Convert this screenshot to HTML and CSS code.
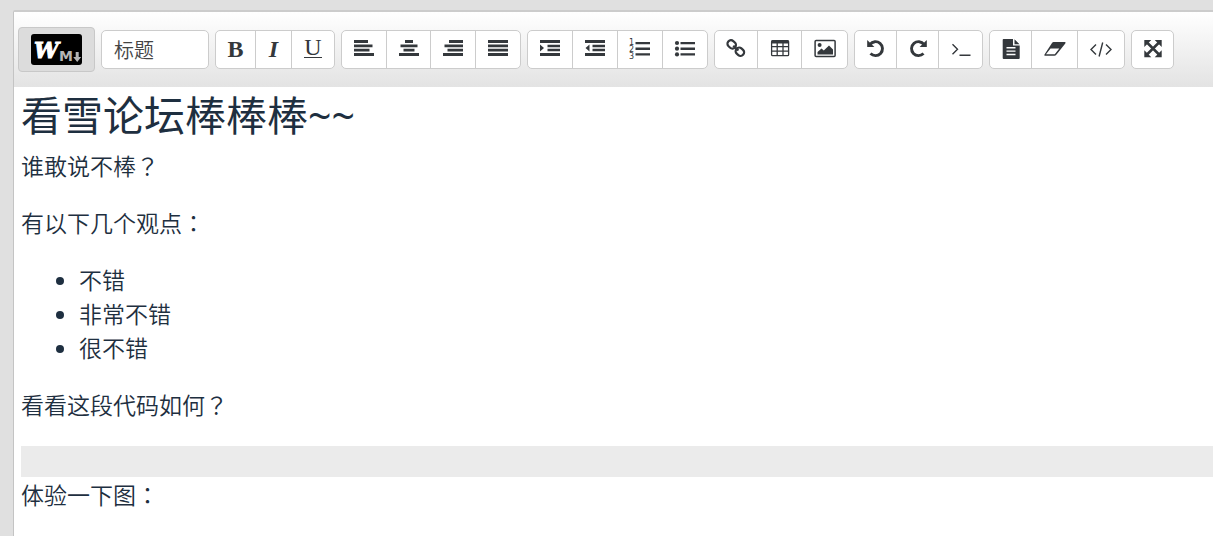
FILE: index.html
```html
<!DOCTYPE html>
<html lang="zh-CN">
<head>
<meta charset="utf-8">
<meta name="viewport" content="width=device-width, initial-scale=1">
<title>编辑器</title>
<link rel="stylesheet" href="styles.css">
</head>
<body>
<main class="editor">
  <div class="toolbar" role="toolbar" aria-label="编辑工具栏">
    <button class="logo-btn" type="button" aria-label="Markdown">
      <svg class="logo" viewBox="0 0 51 31" aria-hidden="true">
        <rect width="51" height="31" rx="3" fill="#000"/>
        <text class="logo-w" x="3" y="24">W</text>
        <text class="logo-m" x="28" y="27">M</text>
        <path d="M44.700 18h3v5h2.500l-4 5-4-5h2.500z" fill="#b5b5b5"/>
      </svg>
    </button>
    <select class="heading-select" aria-label="标题"><option>标题</option></select>

    <div class="group">
      <button class="btn w40" type="button" aria-label="粗体"><span class="letter bold">B</span></button>
      <button class="btn w36" type="button" aria-label="斜体"><span class="letter italic">I</span></button>
      <button class="btn w43" type="button" aria-label="下划线"><span class="letter under">U</span></button>
    </div>

    <div class="group">
      <button class="btn" type="button" aria-label="左对齐"><svg class="icon" viewBox="0 0 24 23"><path d="M2 2h14v3H2zM2 6.400h18.500v2.800H2zM2 10.700h15.500v2.800H2zM2 15h20v3H2z"/></svg></button>
      <button class="btn w44" type="button" aria-label="居中"><svg class="icon" viewBox="0 0 24 23"><path d="M8 2h8v3H8zM3.500 6.400h17v2.800h-17zM6.500 10.700h11v2.800h-11zM2 15h20v3H2z"/></svg></button>
      <button class="btn" type="button" aria-label="右对齐"><svg class="icon" viewBox="0 0 24 23"><path d="M8 2h14v3H8zM3.500 6.400H22v2.800H3.500zM6.500 10.700H22v2.800H6.500zM2 15h20v3H2z"/></svg></button>
      <button class="btn" type="button" aria-label="两端对齐"><svg class="icon" viewBox="0 0 24 23"><path d="M2 2h20v3H2zM2 6.400h20v2.800H2zM2 10.700h20v2.800H2zM2 15h20v3H2z"/></svg></button>
    </div>

    <div class="group">
      <button class="btn" type="button" aria-label="增加缩进"><svg class="icon" viewBox="0 0 24 23"><path d="M2 2h20v3H2zM9.500 6.700H22v2.500H9.500zM9.500 10.700H22v2.500H9.500zM2 15h20v3H2zM2 6.500 6 10l-4 3.500z"/></svg></button>
      <button class="btn" type="button" aria-label="减少缩进"><svg class="icon" viewBox="0 0 24 23"><path d="M2 2h20v3H2zM9.500 6.700H22v2.500H9.500zM9.500 10.700H22v2.500H9.500zM2 15h20v3H2zM6.500 6.500v7L2.500 10z"/></svg></button>
      <button class="btn" type="button" aria-label="有序列表"><svg class="icon" viewBox="0 0 24 23"><path d="M7.500 3.900H22v2.400H7.500zM7.500 9.400H22v2.500H7.500zM7.500 15.200H22v2.400H7.500z"/><g class="digits"><text x="1" y="7">1</text><text x="1" y="14">2</text><text x="1" y="21">3</text></g></svg></button>
      <button class="btn" type="button" aria-label="无序列表"><svg class="icon" viewBox="0 0 24 23"><path d="M7.500 3.900H22v2.400H7.500zM7.500 9.400H22v2.500H7.500zM7.500 15.200H22v2.400H7.500z"/><circle cx="4" cy="5" r="2.100"/><circle cx="4" cy="10.700" r="2.100"/><circle cx="4" cy="16.400" r="2.100"/></svg></button>
    </div>

    <div class="group">
      <button class="btn w43" type="button" aria-label="链接"><svg class="icon line" viewBox="0 0 24 23"><g stroke-width="2.200" transform="rotate(42 12 10)"><rect x="2" y="6.700" width="8.800" height="7" rx="3.300"/><rect x="13" y="6.700" width="8.800" height="7" rx="3.300"/><path d="M8.500 10.200h7"/></g></svg></button>
      <button class="btn w44" type="button" aria-label="表格"><svg class="icon line" viewBox="0 0 24 23"><rect x="3.600" y="2.700" width="17" height="15" rx="1" stroke-width="1.300"/><path d="M3.600 3.900h17" stroke-width="3"/><path d="M3.600 8.700h17M3.600 13.200h17M9.200 4v13.500M15 4v13.500" stroke-width="1.300"/></svg></button>
      <button class="btn w46" type="button" aria-label="图片"><svg class="icon line" viewBox="0 0 24 23"><rect x="2.100" y="2.600" width="20" height="16" rx="1" stroke-width="1.500"/><path class="solid" d="M4.500 16.500V14l4-3.500 2.300 2L16 7.500l4 4v5z"/><circle class="solid" cx="6.600" cy="7" r="2"/></svg></button>
    </div>

    <div class="group">
      <button class="btn w42" type="button" aria-label="撤销"><svg class="icon line" viewBox="0 0 24 23"><path d="M6 6.300a7 7 0 1 1 .5 9.300" stroke-width="2.900"/><path class="solid" d="M3.200 2v7h7.200z"/></svg></button>
      <button class="btn w42" type="button" aria-label="重做"><svg class="icon line" viewBox="0 0 24 23"><path d="M18 6.300a7 7 0 1 0-.5 9.300" stroke-width="2.900"/><path class="solid" d="M20.800 2v7h-7.200z"/></svg></button>
      <button class="btn w44" type="button" aria-label="命令行"><svg class="icon line" viewBox="0 0 24 23"><path d="m3.500 6.300 5 5-5 5M10.500 17.300h11" stroke-width="1.400"/></svg></button>
    </div>

    <div class="group">
      <button class="btn w42" type="button" aria-label="文档"><svg class="icon" viewBox="0 0 24 23"><path fill-rule="evenodd" d="M4.500 1h9.500v6.500h6.700V20q0 1-1 1h-15q-1 0-1-1V2q0-1 .8-1zM7.500 9v1.400h9V9zm0 3.400v1.400h9v-1.400zm0 3.400v1.400h9v-1.400zM15.500 1.200l5 5h-5z"/></svg></button>
      <button class="btn w46" type="button" aria-label="清除"><svg class="icon" viewBox="0 0 24 23"><path fill-rule="evenodd" d="M10.500 4h11q1.800 0 .8 1.400l-8.800 11.200q-.9 1.200-2.200 1.200h-9q-1.700 0-.8-1.400L9 4.900q.7-.9 1.500-.9zM7.500 10.500 3 16.300h8.800l4.500-5.800z"/></svg></button>
      <button class="btn w47" type="button" aria-label="代码"><svg class="icon line" viewBox="0 0 24 23"><path d="m7 6.500-5 5 5 5M17 6.500l5 5-5 5M13.700 4.500l-3.600 14" stroke-width="1.400"/></svg></button>
    </div>

    <div class="group">
      <button class="btn w42" type="button" aria-label="全屏"><svg class="icon line" viewBox="0 0 24 23"><path d="m6 4.500 12 12M18 4.500l-12 12" stroke-width="2.500"/><path class="solid" d="M3.300 2h7L3.300 9zM20.700 2h-7l7 7zM3.300 19.200h7l-7-7zM20.700 19.200h-7l7-7z"/></svg></button>
    </div>
  </div>

  <article class="content">
    <h1>看雪论坛棒棒棒~~</h1>
    <p>谁敢说不棒<span class="punct" lang="zh-TW">？</span></p>
    <p>有以下几个观点<span class="punct" lang="zh-TW">：</span></p>
    <ul>
      <li>不错</li>
      <li>非常不错</li>
      <li>很不错</li>
    </ul>
    <p>看看这段代码如何<span class="punct" lang="zh-TW">？</span></p>
    <pre class="code-block"></pre>
    <p>体验一下图<span class="punct" lang="zh-TW">：</span></p>
  </article>
</main>
</body>
</html>
```

FILE: styles.css
```css
* { box-sizing: border-box; }

body {
  margin: 0;
  padding: 10px 0 0 13px;
  min-height: 100vh;
  display: flex;
  background: #e0e0e0;
  color: #1e2f40;
  font-family: "Noto Sans CJK SC", sans-serif;
  overflow: hidden;
}

.editor {
  flex: 1;
  min-width: 0;
  background: #fff;
  border-top: 2px solid #ccc;
  border-left: 1px solid #c4c4c4;
  border-top-left-radius: 2px;
}

.toolbar {
  display: flex;
  align-items: center;
  gap: 6px;
  height: 75px;
  padding: 0 4px;
  background: linear-gradient(#fff, #e3e3e3);
}

.logo-btn {
  width: 77px;
  height: 45px;
  padding: 0;
  display: flex;
  align-items: center;
  justify-content: center;
  border: 1px solid #c8c8c8;
  border-radius: 4px;
  background: #dcdcdc;
}

.logo { width: 51px; height: 31px; }
.logo-w { font: italic bold 22px "DejaVu Serif", serif; fill: #fff; stroke: #fff; stroke-width: 1px; }
.logo-m { font: bold 14px "DejaVu Sans", sans-serif; fill: #b5b5b5; }

.heading-select {
  width: 108px;
  height: 39px;
  padding: 0 12px;
  appearance: none;
  border: 1px solid #ccc;
  border-radius: 5px;
  background: #fff;
  color: #444;
  font: 350 20px "Noto Sans CJK SC", sans-serif;
}

.group {
  display: flex;
  height: 39px;
  border: 1px solid #ccc;
  border-radius: 5px;
  background: #fff;
  overflow: hidden;
}

.btn {
  width: 45px;
  padding: 7px 0 0;
  display: flex;
  align-items: flex-start;
  justify-content: center;
  border: 0;
  border-left: 1px solid #ccc;
  background: transparent;
  color: #34383c;
}

.btn:first-child { border-left-color: transparent; margin-left: -1px; }
.w36 { width: 36px; }
.w40 { width: 40px; }
.w42 { width: 42px; }
.w43 { width: 43px; }
.w44 { width: 44px; }
.w46 { width: 46px; }
.w47 { width: 47px; }

.icon { width: 24px; height: 23px; fill: currentColor; }
.line { fill: none; stroke: currentColor; }
.solid { fill: currentColor; stroke: none; }
.digits { font: 8px "DejaVu Sans", sans-serif; }

.letter { font: 24px/22px "Liberation Serif", serif; }
.bold { font-weight: bold; }
.italic { font-style: italic; font-weight: bold; }
.under { line-height: 19px; border-bottom: 1px solid currentColor; }

.content {
  padding: 0 0 0 7px;
  font-size: 23px;
  line-height: 34px;
  font-weight: 350;
}

.content h1 {
  margin: 0 0 5px;
  font-family: "Noto Sans", "Noto Sans CJK SC", sans-serif;
  font-size: 41px;
  line-height: 56px;
  font-weight: 400;
}

.content p, .content ul { margin: 0 0 23px; }
.content ul { padding-left: 58px; }
.content li::marker { font-family: "Noto Sans", sans-serif; }
.punct { font-family: "Noto Sans CJK TC", sans-serif; }

.content .code-block {
  margin: 25px 0 0;
  height: 31px;
  background: #ebebeb;
}
```
